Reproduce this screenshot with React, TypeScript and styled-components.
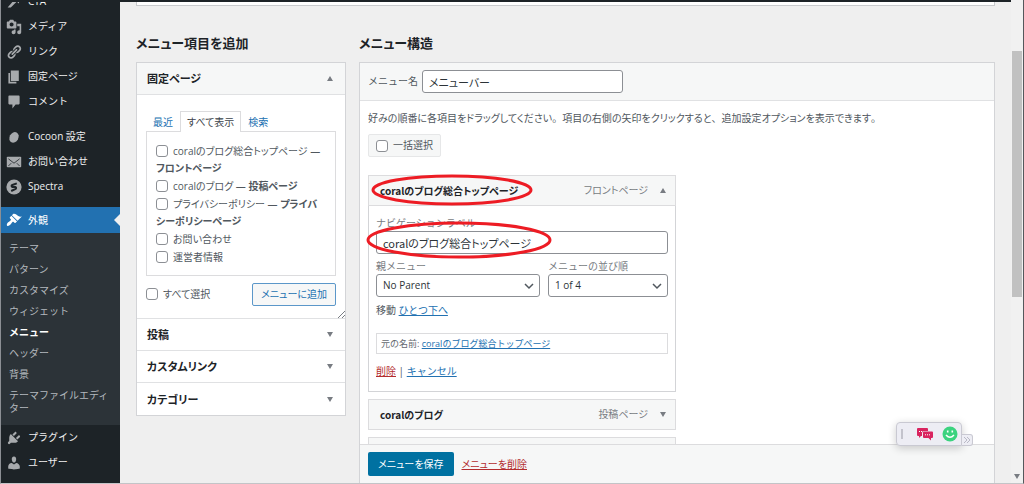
import React, { useState } from "react";
import styled, { createGlobalStyle, css } from "styled-components";

const GlobalStyle = createGlobalStyle`
  *, *::before, *::after { box-sizing: border-box; }
  body {
    margin: 0;
    background: #efefef;
    color: #50575e;
    font-family: "Open Sans", "Noto Sans CJK JP", sans-serif;
    font-feature-settings: "palt";
    font-size: 10px;
    line-height: 17px;
  }
  button, input, select { font: inherit; font-feature-settings: inherit; color: inherit; margin: 0; }
  h2, h3, p, ul { margin: 0; padding: 0; }
  ul { list-style: none; }
`;

const Window = styled.div`
  display: flex;
  height: 100vh;
  overflow: hidden;
  border-left: 1px solid #8c8f94;
  border-right: 1px solid #55585c;
  border-bottom: 1px solid #c3c4c7;
`;

const Page = styled.div`
  flex: 1;
  min-width: 0;
  display: flex;
  flex-direction: column;
`;

const AdminBar = styled.div`
  flex: none;
  height: 2px;
  background: #1d2327;
`;

const Columns = styled.div`
  flex: 1;
  min-height: 0;
  display: flex;
`;

/* ---- sidebar ---- */

const Sidebar = styled.nav`
  flex: none;
  width: 119px;
  overflow: hidden;
  background: #1d2327;
  font-feature-settings: normal;
`;

const SideList = styled.ul`
  margin-top: -13px;
`;

const SideItem = styled.li<{ $gap?: number }>`
  margin-top: ${(p) => p.$gap ?? 0}px;
`;

const SideLink = styled.a<{ $current?: boolean }>`
  display: flex;
  align-items: center;
  gap: 6px;
  height: 25px;
  padding-left: 5px;
  color: #f0f0f1;
  text-decoration: none;
  svg { flex: none; fill: #a7aaad; }
  ${(p) =>
    p.$current &&
    css`
      height: 26px;
      background: #2271b1;
      color: #fff;
      svg { fill: #fff; }
      &::after {
        content: "";
        margin-left: auto;
        border: 6px solid transparent;
        border-left: 0;
        border-right-color: #efefef;
      }
    `}
`;

const SubList = styled.ul`
  padding: 5px 0 6px;
  background: #2c3338;
`;

const SubLink = styled.a<{ $current?: boolean }>`
  display: block;
  padding: 4px 8px;
  color: ${(p) => (p.$current ? "#fff" : "#b4b9be")};
  font-weight: ${(p) => (p.$current ? 700 : 400)};
  line-height: 13px;
  text-decoration: none;
`;

/* ---- main area ---- */

const Main = styled.main`
  flex: 1;
  min-width: 0;
  overflow: hidden;
  padding: 0 16px;
`;

const ManageBox = styled.div`
  height: 4px;
  border: 1px solid #c9cbce;
  border-top: 0;
  background: #fff;
`;

const Frame = styled.div`
  display: flex;
  gap: 13px;
  margin-top: 28px;
`;

const AddColumn = styled.section`
  flex: none;
  width: 210px;
`;

const EditColumn = styled.section`
  flex: 1;
  min-width: 0;
`;

const Heading = styled.h2`
  margin-bottom: 10px;
  color: #1d2327;
  font-size: 13px;
  font-weight: 700;
  line-height: 18px;
`;

const Box = styled.div`
  border: 1px solid #d3d4d7;
  background: #fff;
`;

const SectionHead = styled.button<{ $open?: boolean }>`
  display: flex;
  align-items: center;
  justify-content: space-between;
  width: 100%;
  height: 32px;
  padding: 0 12px 0 10px;
  border: 0;
  border-bottom: 1px solid #e0e1e3;
  background: ${(p) => (p.$open ? "#f6f7f7" : "#fff")};
  color: #1d2327;
  font-size: 11px;
  font-weight: 700;
  text-align: left;
  &:last-child { border-bottom: 0; }
`;

const Arrow = styled.span<{ $up?: boolean }>`
  width: 0;
  border: 3px solid transparent;
  ${(p) =>
    p.$up
      ? "border-top: 0; border-bottom: 5px solid #787c82;"
      : "border-bottom: 0; border-top: 5px solid #787c82;"}
`;

const SectionBody = styled.div`
  position: relative;
  padding: 16px 9px 12px;
  border-bottom: 1px solid #e0e1e3;
`;

const Grip = styled.svg`
  position: absolute;
  right: 0;
  bottom: 0;
`;

const Tabs = styled.div`
  display: flex;
`;

const Tab = styled.button<{ $active?: boolean }>`
  height: 21px;
  margin-bottom: -1px;
  padding: 0 6px;
  border: 1px solid ${(p) => (p.$active ? "#dcdcde" : "transparent")};
  border-bottom: 0;
  background: ${(p) => (p.$active ? "#fff" : "transparent")};
  color: ${(p) => (p.$active ? "#3c434a" : "#2271b1")};
  line-height: 18px;
  z-index: 1;
`;

const CheckList = styled.ul`
  display: grid;
  gap: 1px;
  padding: 11px 11px 9px 9px;
  border: 1px solid #dcdcde;
`;

const CheckLabel = styled.label`
  display: block;
`;

const Checkbox = styled.input.attrs({ type: "checkbox" })`
  appearance: none;
  width: 12px;
  height: 12px;
  margin-right: 5px;
  border: 1px solid #8c8f94;
  border-radius: 3px;
  background: #fff;
  vertical-align: -2px;
  &:checked { background: #2271b1; }
`;

const AddActions = styled.div`
  display: flex;
  align-items: center;
  justify-content: space-between;
  margin-top: 7px;
`;

const AddButton = styled.button`
  height: 23px;
  padding: 0 8px;
  border: 1px solid #5b97c9;
  border-radius: 2px;
  background: #f6f7f7;
  color: #2271b1;
`;

const MenuBox = styled(Box)`
  min-height: 520px;
`;

const NameBar = styled.div`
  display: flex;
  align-items: center;
  gap: 4px;
  height: 38px;
  padding: 0 8px;
  border-bottom: 1px solid #e0e1e3;
  background: #f6f7f7;
  font-feature-settings: normal;
`;

const TextInput = styled.input<{ $wide?: boolean }>`
  display: block;
  width: ${(p) => (p.$wide ? "100%" : "201px")};
  height: 23px;
  padding: 0 6px;
  border: 1px solid #8c8f94;
  border-radius: 3px;
  background: #fff;
  color: #2c3338;
  font-family: "Noto Sans CJK JP", sans-serif;
  font-feature-settings: "palt";
  font-size: 11px;
`;

const MenuBody = styled.div`
  min-height: 440px;
  padding: 9px 8px;
`;

const Stop = styled.span`
  font-feature-settings: normal;
`;

const BulkLabel = styled.label`
  display: inline-flex;
  align-items: center;
  height: 23px;
  margin: 7px 0 18px;
  padding: 0 7px;
  border: 1px solid #e6e7e8;
  border-radius: 2px;
  background: #f6f7f7;
`;

const Items = styled.ul`
  display: grid;
  gap: 7px;
  width: 308px;
  max-width: 100%;
`;

const ItemBar = styled.div`
  position: relative;
  display: flex;
  align-items: center;
  height: 31px;
  padding: 0 9px 0 11px;
  border: 1px solid #dcdcde;
  background: #f6f7f7;
`;

const ItemTitle = styled.h3`
  flex: 1;
  color: #1d2327;
  font-family: "Noto Sans CJK JP", sans-serif;
  font-size: 10px;
  font-weight: 700;
`;

const ItemType = styled.span`
  margin-right: 12px;
  color: #787c82;
`;

const ItemSettings = styled.div`
  padding: 10px 7px 11px;
  border: 1px solid #d3d4d7;
  border-top: 0;
  font-feature-settings: normal;
`;

const Field = styled.label`
  position: relative;
  display: block;
  color: #787c82;
  line-height: 15px;
`;

const FieldRow = styled.div`
  display: grid;
  grid-template-columns: 164px 1fr;
  gap: 8px;
  margin: 5px 0;
`;

const Select = styled.select`
  display: block;
  appearance: none;
  width: 100%;
  height: 23px;
  padding: 0 6px;
  border: 1px solid #8c8f94;
  border-radius: 3px;
  background: #fff;
  color: #2c3338;
`;

const Chevron = styled.svg`
  position: absolute;
  right: 6px;
  bottom: 7px;
  pointer-events: none;
`;

const TextLink = styled.a<{ $danger?: boolean }>`
  color: ${(p) => (p.$danger ? "#b32d2e" : "#2271b1")};
  text-decoration: underline;
`;

const OriginalName = styled.p`
  margin: 14px 0 9px;
  padding: 1px 4px;
  border: 1px solid #dcdcde;
  color: #646970;
  font-size: 9px;
`;

const SaveBar = styled.div`
  position: sticky;
  bottom: 0;
  z-index: 2;
  display: flex;
  align-items: center;
  gap: 8px;
  height: 39px;
  padding: 0 8px;
  border-top: 1px solid #dcdcde;
  background: #f6f7f7;
`;

const SaveButton = styled.button`
  height: 24px;
  padding: 0 10px;
  border: 0;
  border-radius: 2px;
  background: #0071a1;
  color: #fff;
`;

/* ---- hand-drawn rings around the label ---- */

const Ring = styled.svg<{ $x: number; $y: number }>`
  position: absolute;
  left: ${(p) => p.$x}px;
  top: ${(p) => p.$y}px;
  z-index: 1;
  fill: none;
  stroke: #ed1c24;
  stroke-width: 3;
  pointer-events: none;
`;

/* ---- scroll bar and floating tool ---- */

const ScrollTrack = styled.div`
  flex: none;
  display: flex;
  flex-direction: column;
  align-items: center;
  justify-content: space-between;
  width: 12px;
  padding: 51px 1px 4px;
  background: #f1f1f1;
`;

const ScrollThumb = styled.div`
  width: 10px;
  height: 246px;
  background: #c1c1c1;
`;

const Floating = styled.div`
  position: fixed;
  right: 51px;
  bottom: 38px;
  z-index: 3;
  display: flex;
  align-items: flex-end;
`;

const FloatPanel = styled.div`
  display: flex;
  align-items: center;
  gap: 9px;
  width: 66px;
  height: 24px;
  padding: 0 3px 0 4px;
  border: 1px solid #c9c9d2;
  border-radius: 4px 4px 0 4px;
  background: #ededf4;
  box-shadow: 0 2px 8px rgba(0, 0, 0, 0.2);
`;

const Handle = styled.span`
  width: 2px;
  height: 10px;
  margin-right: auto;
  background: #c3c3cc;
`;

const FloatButton = styled.button`
  display: flex;
  padding: 0;
  border: 0;
  background: none;
`;

const FloatTail = styled.div`
  display: flex;
  align-items: center;
  justify-content: center;
  width: 11px;
  height: 12px;
  border: 1px solid #c9c9d2;
  border-left: 0;
  border-radius: 0 3px 3px 0;
  background: #ededf4;
`;

const icons: Record<string, React.ReactNode> = {
  cta: <path d="M18 3l-2 9-2.500-2.500L6 17H2l8.500-10L8 5z" />,
  media: (
    <path d="M13 11V4c0-.55-.45-1-1-1h-1.670L9 1H5L3.670 3H2c-.55 0-1 .45-1 1v7c0 .55.45 1 1 1h10c.55 0 1-.45 1-1zM7 4.500c1.380 0 2.500 1.120 2.500 2.500S8.380 9.500 7 9.500 4.500 8.380 4.500 7 5.620 4.500 7 4.500zM14 6h5v10.500c0 1.380-1.120 2.500-2.500 2.500S14 17.880 14 16.500s1.120-2.500 2.500-2.500c.17 0 .34.02.5.05V9h-3V6zm-4 8.050V13h2v3.500c0 1.380-1.120 2.500-2.500 2.500S7 17.880 7 16.500 8.120 14 9.500 14c.17 0 .34.02.5.05z" />
  ),
  link: (
    <path d="M17.740 2.760c1.680 1.690 1.680 4.410 0 6.100l-1.530 1.520c-1.120 1.120-2.700 1.470-4.140 1.090l2.620-2.610.76-.77.76-.76c.84-.84.84-2.200 0-3.040-.84-.85-2.200-.85-3.040 0l-.77.76-3.380 3.380c-.37-1.440-.02-3.020 1.100-4.140l1.520-1.530c1.690-1.680 4.420-1.680 6.100 0zM8.590 13.430l5.340-5.340c.42-.42.42-1.100 0-1.520-.44-.43-1.130-.39-1.530 0l-5.330 5.340c-.42.42-.42 1.100 0 1.520.44.43 1.130.39 1.520 0zm-.76 2.290l4.140-4.150c.38 1.440.03 3.020-1.090 4.140l-1.520 1.530c-1.690 1.680-4.410 1.680-6.100 0-1.680-1.680-1.680-4.420 0-6.100l1.530-1.520c1.120-1.120 2.700-1.470 4.140-1.100l-4.140 4.150c-.85.84-.85 2.200 0 3.050.84.84 2.200.84 3.040 0z" />
  ),
  page: <path d="M6 15V2h10v13H6zm-1 1h8v2H3V5h2v11z" />,
  comment: (
    <path d="M4 2h12c.6 0 1 .4 1 1v9c0 .6-.4 1-1 1h-4l-4 5v-5H4c-.6 0-1-.4-1-1V3c0-.6.4-1 1-1z" />
  ),
  cocoon: <ellipse cx="10" cy="10.500" rx="5.500" ry="7" transform="rotate(28 10 10.500)" />,
  mail: (
    <>
      <rect x="1" y="3.500" width="18" height="13" rx="1" />
      <path
        d="M3 6l7 5.500L17 6M3 15l3.500-3.500M17 15l-3.500-3.500"
        style={{ fill: "none" }}
        stroke="#1d2327"
      />
    </>
  ),
  spectra: (
    <>
      <circle cx="10" cy="10" r="9.500" />
      <path
        d="M13.500 5.500L8 7.500c-1.500.7-1.300 1.900 0 2.500h3.500c1.500.6 1.500 1.900 0 2.700L6.500 15"
        style={{ fill: "none" }}
        stroke="#1d2327"
        strokeWidth="2.500"
      />
    </>
  ),
  brush: (
    <path d="M14.480 11.060L7.410 3.990l1.500-1.500c.5-.56 2.300-.47 3.510.32 1.210.8 1.430 1.280 2.910 2.100 1.180.64 2.450 1.260 4.450.85zm-.71.71L6.700 4.700 4.930 6.470c-.39.39-.39 1.020 0 1.410l1.060 1.060c.39.39.39 1.030 0 1.420-.6.6-1.430 1.110-2.210 1.690-.35.26-.7.53-1.010.84C1.430 14.230.4 16.080 1.400 17.070c.99 1 2.840-.03 4.180-1.360.31-.31.58-.66.85-1.020.57-.78 1.080-1.610 1.690-2.210.39-.39 1.020-.39 1.410 0l1.060 1.060c.39.39 1.020.39 1.410 0z" />
  ),
  plugin: (
    <path d="M13.110 4.360L9.870 7.600 8 5.730l3.240-3.240c.35-.34 1.050-.2 1.560.32.52.51.66 1.210.31 1.550zm-8 1.770l.91-1.120 9.010 9.010-1.190.84c-.71.71-2.630 1.160-3.820 1.160H6.140L4.900 17.260c-.59.59-1.540.59-2.120 0-.59-.58-.59-1.530 0-2.120l1.240-1.240v-3.880c0-1.130.4-3.190 1.090-3.890zm7.260 3.970l3.240-3.240c.34-.35 1.040-.21 1.550.31.52.51.66 1.210.31 1.550l-3.240 3.250z" />
  ),
  user: (
    <path d="M10 9.250c-2.270 0-2.730-3.440-2.730-3.440C7 4.020 7.820 2 9.970 2c2.160 0 2.980 2.020 2.710 3.810 0 0-.41 3.440-2.680 3.440zm0 2.570L12.720 10c2.390 0 4.520 2.330 4.520 4.530v2.490s-3.650 1.130-7.240 1.130c-3.650 0-7.240-1.130-7.240-1.130v-2.490c0-2.250 1.940-4.480 4.470-4.480z" />
  ),
};

const Icon = ({ name }: { name: string }) => (
  <svg width="16" height="16" viewBox="0 0 20 20" aria-hidden="true">
    {icons[name]}
  </svg>
);

const SelectChevron = () => (
  <Chevron width="10" height="8" viewBox="0 0 10 8" fill="none" stroke="#50575e" strokeWidth="1.500">
    <path d="M1 2l4 4 4-4" />
  </Chevron>
);

const sideItems: { icon: string; text: string; gap?: number }[] = [
  { icon: "cta", text: "CTA" },
  { icon: "media", text: "メディア" },
  { icon: "link", text: "リンク" },
  { icon: "page", text: "固定ページ" },
  { icon: "comment", text: "コメント" },
  { icon: "cocoon", text: "Cocoon 設定", gap: 10 },
  { icon: "mail", text: "お問い合わせ" },
  { icon: "spectra", text: "Spectra" },
];

const subItems = [
  "テーマ",
  "パターン",
  "カスタマイズ",
  "ウィジェット",
  "メニュー",
  "ヘッダー",
  "背景",
  "テーマファイルエディター",
];

const pages: { title: string; state?: string }[] = [
  { title: "coralのブログ総合トップページ", state: "フロントページ" },
  { title: "coralのブログ", state: "投稿ページ" },
  { title: "プライバシーポリシー", state: "プライバシーポリシーページ" },
  { title: "お問い合わせ" },
  { title: "運営者情報" },
];

const tabs = ["最近", "すべて表示", "検索"];

export default function App() {
  const [tab, setTab] = useState("すべて表示");

  return (
    <>
      <GlobalStyle />
      <Window>
        <Page>
          <AdminBar />
          <Columns>
            <Sidebar>
              <SideList>
                {sideItems.map((item) => (
                  <SideItem key={item.text} $gap={item.gap}>
                    <SideLink href="#">
                      <Icon name={item.icon} />
                      {item.text}
                    </SideLink>
                  </SideItem>
                ))}
                <SideItem $gap={8}>
                  <SideLink href="#" $current>
                    <Icon name="brush" />
                    外観
                  </SideLink>
                  <SubList>
                    {subItems.map((text) => (
                      <li key={text}>
                        <SubLink href="#" $current={text === "メニュー"}>
                          {text}
                        </SubLink>
                      </li>
                    ))}
                  </SubList>
                </SideItem>
                <SideItem>
                  <SideLink href="#">
                    <Icon name="plugin" />
                    プラグイン
                  </SideLink>
                </SideItem>
                <SideItem>
                  <SideLink href="#">
                    <Icon name="user" />
                    ユーザー
                  </SideLink>
                </SideItem>
              </SideList>
            </Sidebar>

            <Main>
              <ManageBox />
              <Frame>
                <AddColumn>
                  <Heading>メニュー項目を追加</Heading>
                  <Box>
                    <SectionHead $open>
                      固定ページ
                      <Arrow $up />
                    </SectionHead>
                    <SectionBody>
                      <Tabs>
                        {tabs.map((name) => (
                          <Tab key={name} $active={name === tab} onClick={() => setTab(name)}>
                            {name}
                          </Tab>
                        ))}
                      </Tabs>
                      <CheckList>
                        {pages.map((page) => (
                          <li key={page.title}>
                            <CheckLabel>
                              <Checkbox />
                              {page.title}
                              {page.state && (
                                <>
                                  {" — "}
                                  <b>{page.state}</b>
                                </>
                              )}
                            </CheckLabel>
                          </li>
                        ))}
                      </CheckList>
                      <AddActions>
                        <CheckLabel>
                          <Checkbox />
                          すべて選択
                        </CheckLabel>
                        <AddButton>メニューに追加</AddButton>
                      </AddActions>
                      <Grip width="8" height="8" viewBox="0 0 8 8" stroke="#787c82">
                        <path d="M1 8l7-7M5 8l3-3" />
                      </Grip>
                    </SectionBody>
                    {["投稿", "カスタムリンク", "カテゴリー"].map((name) => (
                      <SectionHead key={name}>
                        {name}
                        <Arrow />
                      </SectionHead>
                    ))}
                  </Box>
                </AddColumn>

                <EditColumn>
                  <Heading>メニュー構造</Heading>
                  <MenuBox>
                    <NameBar>
                      <label htmlFor="menu-name">メニュー名</label>
                      <TextInput id="menu-name" defaultValue="メニューバー" />
                    </NameBar>
                    <MenuBody>
                      <p>
                        好みの順番に各項目をドラッグしてください<Stop>。</Stop>
                        項目の右側の矢印をクリックすると<Stop>、</Stop>
                        追加設定オプションを表示できます<Stop>。</Stop>
                      </p>
                      <BulkLabel>
                        <Checkbox />
                        一括選択
                      </BulkLabel>
                      <Items>
                        <li>
                          <ItemBar>
                            <ItemTitle>coralのブログ総合トップページ</ItemTitle>
                            <ItemType>フロントページ</ItemType>
                            <Arrow $up />
                            <Ring $x={2} $y={-2} width="162" height="32">
                              <ellipse cx="81" cy="16" rx="79" ry="14" />
                            </Ring>
                          </ItemBar>
                          <ItemSettings>
                            <Field>
                              ナビゲーションラベル
                              <TextInput $wide defaultValue="coralのブログ総合トップページ" />
                              <Ring $x={-11} $y={4} width="188" height="40">
                                <ellipse cx="94" cy="20" rx="91" ry="17" />
                              </Ring>
                            </Field>
                            <FieldRow>
                              <Field>
                                親メニュー
                                <Select>
                                  <option>No Parent</option>
                                </Select>
                                <SelectChevron />
                              </Field>
                              <Field>
                                メニューの並び順
                                <Select>
                                  <option>1 of 4</option>
                                </Select>
                                <SelectChevron />
                              </Field>
                            </FieldRow>
                            <p>
                              移動 <TextLink href="#">ひとつ下へ</TextLink>
                            </p>
                            <OriginalName>
                              元の名前: <TextLink href="#">coralのブログ総合トップページ</TextLink>
                            </OriginalName>
                            <p>
                              <TextLink href="#" $danger>削除</TextLink> |{" "}
                              <TextLink href="#">キャンセル</TextLink>
                            </p>
                          </ItemSettings>
                        </li>
                        <li>
                          <ItemBar>
                            <ItemTitle>coralのブログ</ItemTitle>
                            <ItemType>投稿ページ</ItemType>
                            <Arrow />
                          </ItemBar>
                        </li>
                        <li>
                          <ItemBar />
                        </li>
                      </Items>
                    </MenuBody>
                    <SaveBar>
                      <SaveButton>メニューを保存</SaveButton>
                      <TextLink href="#" $danger>メニューを削除</TextLink>
                    </SaveBar>
                  </MenuBox>
                </EditColumn>
              </Frame>
            </Main>
          </Columns>
        </Page>

        <ScrollTrack>
          <ScrollThumb />
          <Arrow />
        </ScrollTrack>
      </Window>

      <Floating>
        <FloatPanel>
          <Handle />
          <FloatButton aria-label="チャット">
            <svg width="16" height="13" viewBox="0 0 16 13" fill="#d9245f">
              <path d="M1 0h9q1 0 1 1v2H7q-2 0-2 2v3H4L2 10V8H1Q0 8 0 7V1q0-1 1-1z" />
              <path d="M7 3.500h8q1 0 1 1V9q0 1-1 1h-1v2.500L11.500 10H7q-1 0-1-1V4.500q0-1 1-1z" />
              <path d="M2 3.500h3" stroke="#fff" strokeDasharray="1 1" />
              <path d="M8 6.800h6" stroke="#fff" strokeDasharray="1 1" />
            </svg>
          </FloatButton>
          <FloatButton aria-label="スマイル">
            <svg width="16" height="16" viewBox="0 0 16 16">
              <circle cx="8" cy="8" r="7.500" fill="#3bd37f" />
              <path d="M5.700 4.500v2M10.300 4.500v2" stroke="#fff" strokeWidth="1.600" />
              <path d="M4 9q4 4.500 8 0" stroke="#fff" strokeWidth="1.500" fill="none" />
            </svg>
          </FloatButton>
        </FloatPanel>
        <FloatTail>
          <svg width="6" height="6" viewBox="0 0 6 6" fill="none" stroke="#b9b9c6">
            <path d="M0 0l3 3-3 3M3 0l3 3-3 3" />
          </svg>
        </FloatTail>
      </Floating>
    </>
  );
}
